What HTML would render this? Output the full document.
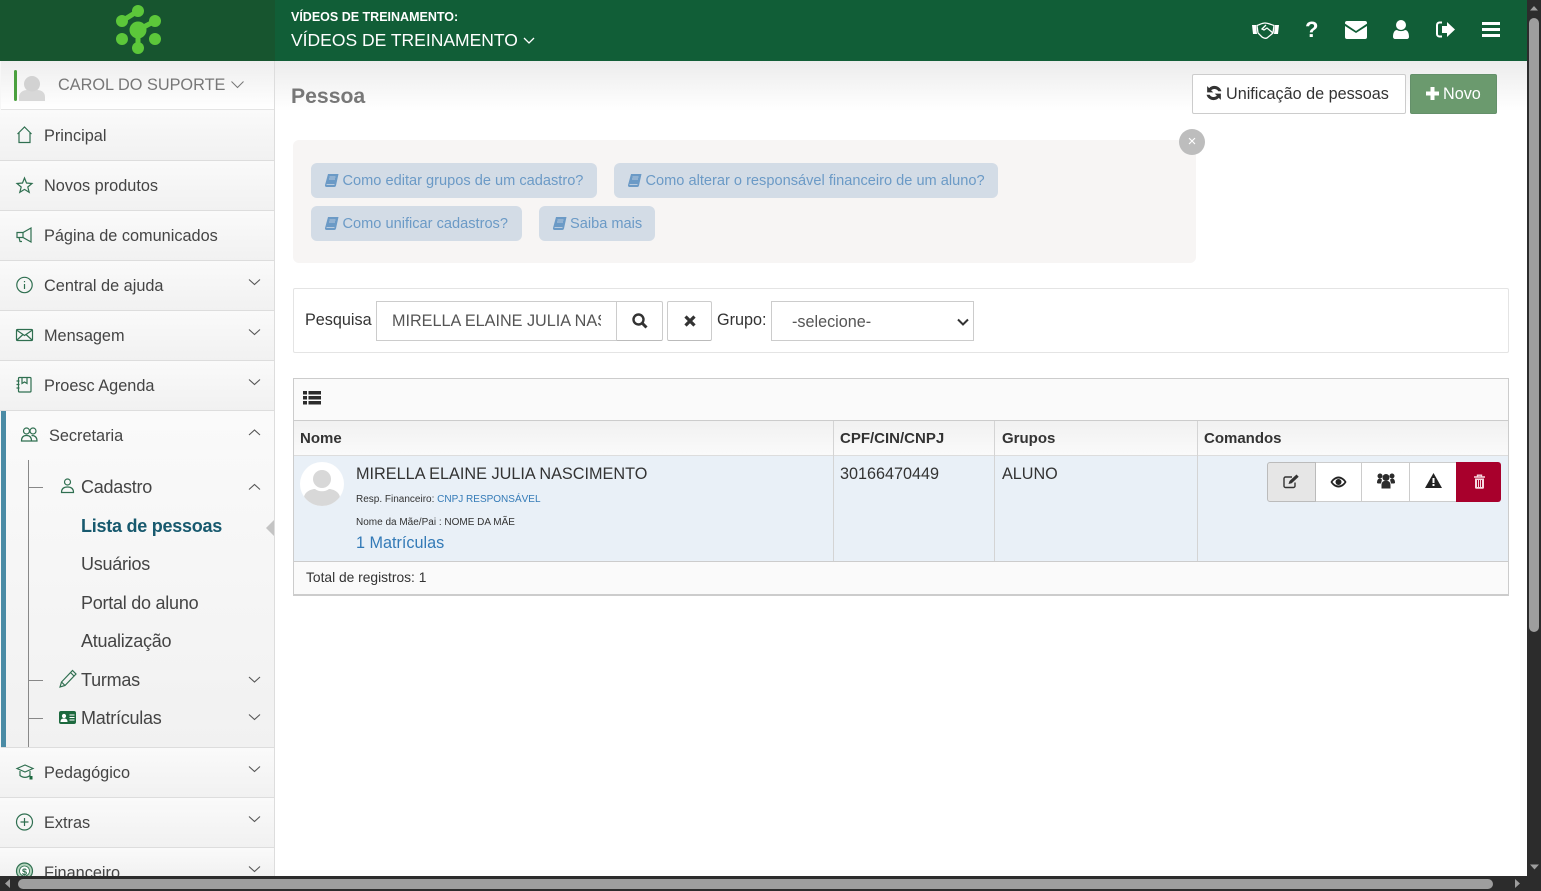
<!DOCTYPE html>
<html lang="pt-BR"><head><meta charset="utf-8"><title>Pessoa</title>
<style>
*{box-sizing:border-box}
html,body{margin:0;padding:0;width:1541px;height:891px;overflow:hidden;background:#fff;font-family:"Liberation Sans",sans-serif;color:#333}
.a{position:absolute}
.t{position:absolute;white-space:nowrap;line-height:20px}
svg{position:absolute;overflow:visible}
.row{position:absolute;left:0;width:274px;height:50px;border-bottom:1px solid #ddd;background:linear-gradient(#fafafa,#f1f1f1)}
.m{font-size:16.3px;color:#444;left:44px}
.s{font-size:18px;color:#444;left:81px;letter-spacing:-.25px}
.ic{fill:none;stroke:#2f6f50;stroke-width:1.2}
.ch{fill:none;stroke:#555;stroke-width:1.1}
.hb{position:absolute;height:35px;background:#d3dce6;border-radius:6px;font-size:14.6px;color:#6b9ac6;line-height:37px;white-space:nowrap;padding-left:31.500px}
.hb svg{left:14px;top:11px}
.th{position:absolute;top:429px;font-size:15px;font-weight:bold;color:#333;line-height:20px}
.cb{position:absolute;top:462px;height:40px;background:#fff;border:1px solid #ccc;border-left:0}
</style></head><body>

<!-- top bar -->
<div class="a" style="left:0;top:0;width:1527px;height:61px;background:#115e37"></div>
<div class="a" style="left:0;top:0;width:275px;height:61px;background:#17552f"></div>
<svg style="left:0;top:0" width="275" height="61">
<g stroke="#5cc73a" stroke-width="5"><path d="M122 21L138 11M138 30L155 21M138 30V48"/></g>
<g fill="#5cc73a"><circle cx="138" cy="30" r="8.5"/><circle cx="138" cy="48" r="6"/><circle cx="122" cy="39" r="6"/><circle cx="155" cy="39" r="6"/><circle cx="122" cy="21" r="6"/><circle cx="138" cy="11" r="6"/><circle cx="155" cy="21" r="6"/></g>
</svg>
<div class="t" style="left:291px;top:7px;font-size:12.5px;font-weight:bold;color:#fff">VÍDEOS DE TREINAMENTO:</div>
<div class="t" style="left:291px;top:30px;font-size:17.5px;color:#fff">VÍDEOS DE TREINAMENTO</div>
<svg style="left:523px;top:37px" width="12" height="7"><path d="M1 1l5 5 5-5" fill="none" stroke="#fff" stroke-width="1.3"/></svg>
<!-- top icons -->
<svg style="left:1251px;top:20px" width="30" height="20"><path d="M1 5h4l1 9H2zM28 5h-4l-1 9h4z" fill="#fff"/><path d="M6 5.500c3-1 5-2.500 8-2.500 3 0 6 1.500 9 2.500l-1 7.500-6 5c-2 1-3 0-5-1l-4-4zM15 5l-4 4 2 1 3-2 6 5" fill="none" stroke="#fff" stroke-width="1.300"/></svg>
<div class="t" style="left:1305px;top:20px;font-size:22px;font-weight:bold;color:#fff">?</div>
<svg style="left:1345px;top:21px" width="22" height="18"><path d="M2 0h18a2 2 0 0 1 2 2v.6L11 10 0 2.600V2a2 2 0 0 1 2-2zM0 5l11 7 11-7v11a2 2 0 0 1-2 2H2a2 2 0 0 1-2-2z" fill="#fff"/></svg>
<svg style="left:1393px;top:20px" width="16" height="19"><circle cx="8" cy="5" r="5" fill="#fff"/><path d="M0 17c0-5 2-7 4-7 2 1.500 6 1.500 8 0 2 0 4 2 4 7 0 1-1 2-2 2H2c-1 0-2-1-2-2z" fill="#fff"/></svg>
<svg style="left:1436px;top:21px" width="20" height="17"><path d="M6 1.500H3.500A2.500 2.500 0 0 0 1 4v9a2.500 2.500 0 0 0 2.500 2.500H6" fill="none" stroke="#fff" stroke-width="2"/><path d="M11 1l8 7.500-8 7.500v-4H6V5h5z" fill="#fff"/></svg>
<svg style="left:1482px;top:22px" width="18" height="15"><path d="M0 0h18v3H0zM0 6h18v3H0zM0 12h18v3H0z" fill="#fff"/></svg>

<!-- content top shadow -->
<div class="a" style="left:275px;top:61px;width:1252px;height:50px;background:linear-gradient(#ececec,#fff)"></div>

<!-- sidebar -->
<div class="a" style="left:0;top:61px;width:275px;height:815px;background:#f7f7f7;border-right:1px solid #ddd"></div>
<div class="a" style="left:1px;top:61px;width:273px;height:49px;background:linear-gradient(#eee,#fff);border-bottom:1px solid #e4e4e4"></div>
<div class="a" style="left:14px;top:70px;width:3px;height:31px;background:#4aa03e;border-radius:2px"></div>
<svg style="left:19px;top:75px" width="27" height="26"><circle cx="13" cy="9" r="8" fill="#d2d2d2"/><path d="M0 26v-4c0-5 5-7 8-7 3 2 7 2 10 0 4 0 8 2 8 7v4z" fill="#d8d8d8"/></svg>
<div class="t" style="left:58px;top:75px;font-size:16.3px;color:#777">CAROL DO SUPORTE</div>
<svg style="left:231px;top:81px" width="13" height="7"><path d="M.5.500l6 6 6-6" fill="none" stroke="#777" stroke-width="1"/></svg>

<div class="row" style="top:110px;height:51px"></div>
<div class="row" style="top:161px"></div>
<div class="row" style="top:211px"></div>
<div class="row" style="top:261px"></div>
<div class="row" style="top:311px"></div>
<div class="row" style="top:361px"></div>
<div class="a" style="left:1px;top:411px;width:273px;height:337px;background:linear-gradient(#fafafa,#f1f1f1);border-bottom:1px solid #ddd"></div>
<div class="row" style="top:748px"></div>
<div class="row" style="top:798px"></div>
<div class="row" style="top:848px;height:28px;border:0"></div>
<div class="a" style="left:1px;top:411px;width:5px;height:336px;background:#4a8ba5"></div>
<div class="a" style="left:28px;top:460px;width:1px;height:287px;background:#888"></div>
<div class="a" style="left:29px;top:487px;width:14px;height:1px;background:#888"></div>
<div class="a" style="left:29px;top:680px;width:14px;height:1px;background:#888"></div>
<div class="a" style="left:29px;top:718px;width:14px;height:1px;background:#888"></div>

<div class="t m" style="top:126px">Principal</div>
<div class="t m" style="top:176px">Novos produtos</div>
<div class="t m" style="top:226px">Página de comunicados</div>
<div class="t m" style="top:276px">Central de ajuda</div>
<div class="t m" style="top:326px">Mensagem</div>
<div class="t m" style="top:376px">Proesc Agenda</div>
<div class="t m" style="top:426px;left:49px">Secretaria</div>
<div class="t m" style="top:763px">Pedagógico</div>
<div class="t m" style="top:813px">Extras</div>
<div class="a" style="left:0;top:848px;width:274px;height:28px;overflow:hidden"><div class="t m" style="top:15px">Financeiro</div></div>
<div class="t s" style="top:477px">Cadastro</div>
<div class="t s" style="top:516px;font-weight:bold;color:#17596e">Lista de pessoas</div>
<div class="t s" style="top:554px">Usuários</div>
<div class="t s" style="top:593px">Portal do aluno</div>
<div class="t s" style="top:631px">Atualização</div>
<div class="t s" style="top:670px">Turmas</div>
<div class="t s" style="top:708px">Matrículas</div>
<svg style="left:266px;top:520px" width="8" height="16"><path d="M8 0v16L0 8z" fill="#c4c4c4"/></svg>

<!-- sidebar icons -->
<svg style="left:0;top:0" width="275" height="891">
<path class="ic" d="M17.500 134l7-7 7 7M19 133v9.500h11V133"/>
<path class="ic" d="M24.500 178l2 5 5.500.5-4.200 3.500 1.400 5.300-4.700-2.900-4.700 2.900 1.400-5.300L17 183.500l5.500-.5z"/>
<path class="ic" d="M17 232.500h6l8-4.500v14l-8-4.500h-6zM23 232.500v5M19 237.500l1 4h2"/>
<circle class="ic" cx="24.500" cy="285" r="7.700"/><path class="ic" d="M24.500 284v5M24.500 281v1.300"/>
<rect class="ic" x="16.500" y="329.500" width="16" height="11" rx="1"/><path class="ic" d="M16.500 330l8 5.500 8-5.500M17 340l6-5.500M32 340l-6-5.500"/>
<rect class="ic" x="18.500" y="377.500" width="12.500" height="14.500" rx="1"/><path class="ic" d="M22 377.500v6l2.500-1.500 2.500 1.500v-6M16.500 381h3M16.500 384.500h3M16.500 388h3"/>
<circle class="ic" cx="26.500" cy="431" r="3"/><circle class="ic" cx="33" cy="431" r="3"/><path class="ic" d="M21.500 441c0-4 2-5.500 5-5.500s5 1.500 5 5.500zM31.500 435.500c3 0 5.500 1.500 5.500 5.500h-5"/>
<circle class="ic" cx="67.500" cy="482" r="3"/><path class="ic" d="M61.500 492.500c0-4 2.500-5.500 6-5.500s6 1.500 6 5.500z"/>
<path class="ic" d="M60 687l1.500-5 11-11.500 3.500 3.500-11 11.500zM61.500 682l3.500 3.500M70.500 672.500l3.500 3.500"/>
<rect x="59" y="711" width="17" height="13" rx="2" fill="#1d6a3f"/><circle cx="64" cy="716" r="2.100" fill="#fff"/><path d="M60.500 722c0-3 1.500-3.500 3.500-3.500s3.500.5 3.500 3.500z" fill="#fff"/><path d="M69.500 715h5M69.500 717.500h5M69.500 720h5" stroke="#fff" stroke-width="1"/>
<path class="ic" d="M17 768.500l8-3.500 8 3.500-8 3.500zM20 771v4.500c3 2.500 7 2.500 10 0V771"/><rect x="29.500" y="776" width="3" height="3.500" fill="#1d6a3f"/>
<circle class="ic" cx="24.500" cy="822" r="8"/><path class="ic" d="M24.500 818v8M20.500 822h8"/>
<circle cx="24.500" cy="871" r="8" fill="#b5d6bf" stroke="#2f6f50" stroke-width="1.200"/><circle cx="24.500" cy="871" r="5" fill="#fff" stroke="#2f6f50" stroke-width=".8"/><text x="24.500" y="875" font-size="9" font-weight="bold" text-anchor="middle" fill="#2f6f50" font-family="Liberation Sans">$</text>
<g class="ch">
<path d="M249 279.500l5.500 5 5.500-5"/><path d="M249 329.500l5.500 5 5.500-5"/><path d="M249 379.500l5.500 5 5.500-5"/>
<path d="M249 435l5.500-5 5.500 5"/><path d="M249 489.500l5.500-5 5.500 5"/>
<path d="M249 677l5.500 5 5.500-5"/><path d="M249 714.500l5.500 5 5.500-5"/>
<path d="M249 766.500l5.500 5 5.500-5"/><path d="M249 816.500l5.500 5 5.500-5"/><path d="M249 866.500l5.500 5 5.500-5"/>
</g>
</svg>

<!-- page head -->
<div class="t" style="left:291px;top:87px;font-size:21.2px;font-weight:bold;color:#777">Pessoa</div>
<div class="a" style="left:1192px;top:74px;width:214px;height:40px;background:#fff;border:1px solid #ccc;border-radius:2px"></div>
<svg style="left:1206px;top:85px" width="16" height="16" viewBox="1 1 14 14"><path d="M14.500 6.500C13.800 3.600 11.200 1.800 8.300 1.800c-1.800 0-3.400.7-4.500 1.900L2 2v5.500h5.400L5.500 5.700c.7-.8 1.700-1.200 2.800-1.200 1.600 0 3 1 3.500 2zM1.500 9.500c.7 2.900 3.300 4.700 6.200 4.700 1.800 0 3.400-.7 4.500-1.900L14 14V8.500H8.600l1.900 1.800c-.7.800-1.700 1.200-2.800 1.200-1.600 0-3-1-3.500-2z" fill="#333"/></svg>
<div class="t" style="left:1226px;top:84px;font-size:16.2px;color:#333">Unificação de pessoas</div>
<div class="a" style="left:1410px;top:74px;width:87px;height:40px;background:#6b9a6e;border:1px solid #64906a;border-radius:2px"></div>
<svg style="left:1426px;top:87px" width="13" height="13"><path d="M4.500 0h4v4.500H13v4H8.500V13h-4V8.500H0v-4h4.500z" fill="#fff"/></svg>
<div class="t" style="left:1443px;top:84px;font-size:16.2px;color:#fff">Novo</div>

<!-- help box -->
<div class="a" style="left:293px;top:140px;width:903px;height:123px;background:#f7f5f4;border-radius:6px"></div>
<div class="a" style="left:1179px;top:129px;width:26px;height:26px;border-radius:50%;background:#bdbdbd;color:#fff;font-size:15px;line-height:26px;text-align:center">×</div>
<div class="hb" style="left:311px;top:163px;width:286px"><svg width="13" height="13" viewBox="0 0 13 13"><path d="M3 0h10.500L11 11.500c-.2.900-.8 1.500-1.800 1.500H1.500C.300 13-.3 12 .100 10.800z" fill="#6b9ac6"/><path d="M4.500 3h6M4 5h6M1.500 10.500h8" stroke="#d3dce6" stroke-width=".8"/></svg>Como editar grupos de um cadastro?</div>
<div class="hb" style="left:614px;top:163px;width:384px"><svg width="13" height="13" viewBox="0 0 13 13"><path d="M3 0h10.500L11 11.500c-.2.900-.8 1.500-1.800 1.500H1.500C.300 13-.3 12 .100 10.800z" fill="#6b9ac6"/><path d="M4.500 3h6M4 5h6M1.500 10.500h8" stroke="#d3dce6" stroke-width=".8"/></svg>Como alterar o responsável financeiro de um aluno?</div>
<div class="hb" style="left:311px;top:206px;width:211px"><svg width="13" height="13" viewBox="0 0 13 13"><path d="M3 0h10.500L11 11.500c-.2.900-.8 1.500-1.800 1.500H1.500C.300 13-.3 12 .100 10.800z" fill="#6b9ac6"/><path d="M4.500 3h6M4 5h6M1.500 10.500h8" stroke="#d3dce6" stroke-width=".8"/></svg>Como unificar cadastros?</div>
<div class="hb" style="left:539px;top:206px;width:116px;padding-left:31px"><svg width="13" height="13" viewBox="0 0 13 13"><path d="M3 0h10.500L11 11.500c-.2.900-.8 1.500-1.800 1.500H1.500C.300 13-.3 12 .100 10.800z" fill="#6b9ac6"/><path d="M4.500 3h6M4 5h6M1.500 10.500h8" stroke="#d3dce6" stroke-width=".8"/></svg>Saiba mais</div>

<!-- search -->
<div class="a" style="left:293px;top:288px;width:1216px;height:65px;background:#fff;border:1px solid #e4e4e4;border-radius:2px"></div>
<div class="t" style="left:305px;top:310px;font-size:16.2px;color:#333">Pesquisa</div>
<input class="a" value="MIRELLA ELAINE JULIA NASCIMENTO" style="left:376px;top:301px;width:241px;height:40px;border:1px solid #ccc;padding:1px 15px 0;font:16.2px 'Liberation Sans',sans-serif;color:#555;background:#fff;outline:0;border-radius:0">
<div class="a" style="left:616px;top:301px;width:47px;height:40px;background:#fff;border:1px solid #ccc;border-bottom-color:#bbb;border-radius:0 2px 2px 0"></div>
<svg style="left:632px;top:313px" width="16" height="16"><circle cx="6.500" cy="6.500" r="5" fill="none" stroke="#333" stroke-width="2.400"/><path d="M10.500 10.500l4 4" stroke="#333" stroke-width="3"/></svg>
<div class="a" style="left:667px;top:301px;width:45px;height:40px;background:#fff;border:1px solid #ccc;border-bottom-color:#bbb;border-radius:2px"></div>
<svg style="left:684px;top:315px" width="12" height="12"><path d="M1.500 1.500l9 9M10.500 1.500l-9 9" stroke="#333" stroke-width="3.200"/></svg>
<div class="t" style="left:717px;top:310px;font-size:16.2px;color:#333">Grupo:</div>
<select class="a" style="left:771px;top:301px;width:203px;height:40px;border:1px solid #ccc;padding:1px 20px 0;font:16.2px 'Liberation Sans',sans-serif;color:#555;background:#fff;outline:0;border-radius:0;appearance:none;-webkit-appearance:none"><option>-selecione-</option></select>
<svg style="left:957px;top:318px" width="12" height="8"><path d="M1 1.500l5 5 5-5" fill="none" stroke="#333" stroke-width="2"/></svg>

<!-- table -->
<div class="a" style="left:293px;top:378px;width:1216px;height:218px;background:#fafafa;border:1px solid #ccc;border-bottom:2px solid #ccc"></div>
<svg style="left:303px;top:391px" width="18" height="14"><path d="M0 0h4v3.500H0zM5.500 0H18v3.500H5.500zM0 5h4v3.500H0zM5.500 5H18v3.500H5.500zM0 10h4v3.500H0zM5.500 10H18v3.500H5.500z" fill="#2b2b2b"/></svg>
<div class="a" style="left:294px;top:420px;width:1214px;height:36px;background:linear-gradient(#f1f1f1,#fafafa);border-top:1px solid #ccc;border-bottom:1px solid #ddd"></div>
<div class="a" style="left:294px;top:456px;width:1214px;height:106px;background:#e9f0f7;border-bottom:1px solid #ccc"></div>
<div class="a" style="left:833px;top:421px;width:1px;height:140px;background:#d4d4d4"></div>
<div class="a" style="left:994px;top:421px;width:1px;height:140px;background:#d4d4d4"></div>
<div class="a" style="left:1197px;top:421px;width:1px;height:140px;background:#d4d4d4"></div>
<div class="th" style="left:300px">Nome</div>
<div class="th" style="left:840px">CPF/CIN/CNPJ</div>
<div class="th" style="left:1002px">Grupos</div>
<div class="th" style="left:1204px">Comandos</div>

<div class="a" style="left:300px;top:462px;width:44px;height:44px;border-radius:50%;background:#fff;overflow:hidden"><svg style="left:0;top:0" width="44" height="44"><circle cx="22" cy="17" r="9" fill="#d8d8d8"/><path d="M4 44v-8c0-6 7-9 11-9 4 3 10 3 14 0 4 0 11 3 11 9v8z" fill="#d8d8d8"/></svg></div>
<div class="t" style="left:356px;top:464px;font-size:16.25px;color:#333">MIRELLA ELAINE JULIA NASCIMENTO</div>
<div class="t" style="left:356px;top:490px;font-size:10px;color:#333">Resp. Financeiro: <span style="color:#337ab7">CNPJ RESPONSÁVEL</span></div>
<div class="t" style="left:356px;top:513px;font-size:10px;color:#333">Nome da Mãe/Pai : NOME DA MÃE</div>
<div class="t" style="left:356px;top:533px;font-size:16.2px;color:#337ab7">1 Matrículas</div>
<div class="t" style="left:840px;top:464px;font-size:16.2px;color:#333">30166470449</div>
<div class="t" style="left:1002px;top:464px;font-size:16.2px;color:#333">ALUNO</div>
<div class="t" style="left:306px;top:568px;font-size:13.8px;color:#333">Total de registros: 1</div>

<!-- row commands -->
<div class="cb" style="left:1267px;width:49px;background:#e6e6e6;border-left:1px solid #bbb;border-color:#bbb;border-radius:3px 0 0 3px"></div>
<div class="cb" style="left:1316px;width:46px"></div>
<div class="cb" style="left:1362px;width:48px"></div>
<div class="cb" style="left:1410px;width:47px;border-right:0"></div>
<div class="a" style="left:1456px;top:462px;width:45px;height:40px;background:#a8002c;border-radius:0 3px 3px 0"></div>
<svg style="left:1283px;top:474px" width="17" height="15"><path d="M12 8.500v3.500a1.500 1.500 0 0 1-1.500 1.500h-8A1.500 1.500 0 0 1 1 12V4.500A1.500 1.500 0 0 1 2.500 3H9" fill="none" stroke="#333" stroke-width="1.400"/><path d="M5.500 10l1-3 7-6.500 2.200 2.200-7 6.500z" fill="#333"/></svg>
<svg style="left:1330px;top:476px" width="17" height="12"><path d="M.5 6c2-3.500 5-5.500 8-5.500s6 2 8 5.500c-2 3.500-5 5.500-8 5.500S2.500 9.500.5 6z" fill="#222"/><path d="M2.500 6c1.500-2 3.500-3.500 6-3.500s4.500 1.500 6 3.500c-1.500 2-3.500 3.500-6 3.500S4 8 2.500 6z" fill="#fff"/><circle cx="8.500" cy="6" r="3" fill="#222"/></svg>
<svg style="left:1377px;top:473px" width="18" height="16"><circle cx="9" cy="4.500" r="3.500" fill="#2b2b2b"/><circle cx="3" cy="3" r="2.500" fill="#2b2b2b"/><circle cx="15" cy="3" r="2.500" fill="#2b2b2b"/><path d="M0 10c0-3 1-4.500 3-4.500l2 1-1 4H1zM18 10c0-3-1-4.500-3-4.500l-2 1 1 4h3zM4.500 15.500V12c0-2.500 1.500-4 3-4h3c1.500 0 3 1.500 3 4v3.500z" fill="#2b2b2b"/></svg>
<svg style="left:1425px;top:473px" width="17" height="15"><path d="M8.500 0L17 15H0z" fill="#222"/><path d="M7.500 5h2v5h-2zM7.500 11h2v2h-2z" fill="#fff"/></svg>
<svg style="left:1473px;top:474px" width="13" height="15"><path d="M1 3h11M4.500 3V1.200h4V3" fill="none" stroke="#f7dbe2" stroke-width="1.400"/><path d="M2 4.500h9v9c0 .8-.5 1.200-1.200 1.200H3.200C2.500 14.700 2 14.300 2 13.500z" fill="#f7dbe2"/><path d="M4.500 6v7M6.500 6v7M8.500 6v7" stroke="#a8002c"/></svg>

<!-- scrollbars -->
<div class="a" style="left:1527px;top:0;width:14px;height:891px;background:#2c2c2c"></div>
<div class="a" style="left:1529px;top:18px;width:10px;height:614px;background:#9e9e9e;border-radius:5px"></div>
<svg style="left:1527px;top:0" width="14" height="891"><path d="M3 10.500L7 6l4 4.500z" fill="#9e9e9e"/><path d="M3 864.500h9L7.500 869.500z" fill="#9e9e9e"/></svg>
<div class="a" style="left:0;top:876px;width:1541px;height:15px;background:#2c2c2c"></div>
<div class="a" style="left:18px;top:879px;width:1475px;height:10px;background:#9e9e9e;border-radius:5px"></div>
<svg style="left:0;top:876px" width="1541" height="15"><path d="M10 3v9L5 7.500z" fill="#9e9e9e"/><path d="M1515 3v9l5-4.500z" fill="#9e9e9e"/></svg>
</body></html>
